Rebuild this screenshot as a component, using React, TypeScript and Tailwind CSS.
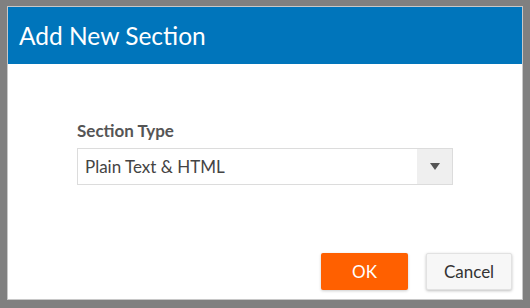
import React from "react";

export default function App() {
  return (
    <div
      className="w-[530px] h-[308px] bg-[#808080] pt-[6px] pl-[7px] overflow-hidden"
      style={{ fontFamily: "Lato, 'Open Sans', sans-serif" }}
    >
      {/* Dialog */}
      <div className="w-[516px] h-[294px] bg-white border border-[#c8c8c8] flex flex-col">
        {/* Header */}
        <div className="h-[57px] bg-[#0075bb] flex items-center px-[11px] shrink-0">
          <h1 className="text-[24.5px] text-white leading-none pt-[1px]">Add New Section</h1>
        </div>

        {/* Body */}
        <div className="flex-1 pl-[69px] pt-[58px]">
          <label className="block text-[17px] font-bold text-[#555] leading-none mb-[9px]">
            Section Type
          </label>
          <div className="w-[376px] h-[37px] border border-[#dcdcdc] flex">
            <div className="flex-1 flex items-center pl-[7px] text-[17px] text-[#444]">
              Plain Text &amp; HTML
            </div>
            <div className="w-[35px] bg-[#efefef] flex items-center justify-center">
              <svg width="10" height="7" viewBox="0 0 10 7">
                <path d="M0 0 H10 L5 7 Z" fill="#555" />
              </svg>
            </div>
          </div>
        </div>

        {/* Footer */}
        <div className="flex justify-end gap-[18px] pr-[10px] pb-[9px]">
          <button className="w-[87px] h-[37px] bg-[#ff6000] text-white text-[17px] rounded-[2px] shadow-[0_1px_3px_rgba(0,0,0,0.2)]">
            OK
          </button>
          <button className="w-[86px] h-[37px] bg-[#f7f7f7] text-[#333] text-[17px] border border-[#e2e2e2] rounded-[2px] shadow-[0_1px_3px_rgba(0,0,0,0.25)]">
            Cancel
          </button>
        </div>
      </div>
    </div>
  );
}
